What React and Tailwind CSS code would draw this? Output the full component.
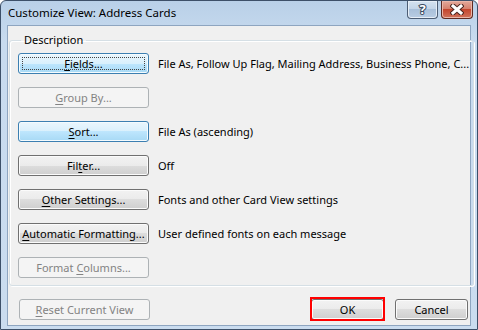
const font = { fontFamily: '"Noto Sans", "Segoe UI", sans-serif' };

const normal =
  "border-[#707070] bg-[linear-gradient(#f2f2f2_0%,#ebebeb_50%,#dddddd_50%,#cfcfcf_100%)] text-black shadow-[inset_0_0_0_1px_#fbfbfb]";
const hot =
  "border-[#3c7fb1] bg-[linear-gradient(#eaf6fd_0%,#d9f0fc_50%,#bee6fd_50%,#a7d9f5_100%)] text-black shadow-[inset_0_0_0_1px_#f4fbfe]";
const disabled = "border-[#adb2b5] bg-[#f4f4f4] text-[#838383]";

function Btn({ children, kind = "normal", focus = false, className = "" }) {
  const look = kind === "hot" ? hot : kind === "disabled" ? disabled : normal;
  return (
    <button
      className={`relative flex h-[21px] items-center justify-center whitespace-nowrap rounded-[3px] border text-[11px] leading-none ${look} ${className}`}
    >
      {children}
      {focus && (
        <span className="pointer-events-none absolute inset-[3px] border border-dotted border-[#444]" />
      )}
    </button>
  );
}

const U = ({ children }) => <span className="underline underline-offset-[2px]">{children}</span>;

const rows = [
  { label: <><U>F</U>ields...</>, kind: "hot", focus: true, desc: "File As, Follow Up Flag, Mailing Address, Business Phone, C..." },
  { label: <><U>G</U>roup By...</>, kind: "disabled" },
  { label: <><U>S</U>ort...</>, kind: "hot", desc: "File As (ascending)" },
  { label: <>Fil<U>t</U>er...</>, desc: "Off" },
  { label: <><U>O</U>ther Settings...</>, desc: "Fonts and other Card View settings" },
  { label: <><U>A</U>utomatic Formatting...</>, desc: "User defined fonts on each message" },
  { label: <>Format <U>C</U>olumns...</>, kind: "disabled" },
];

export default function App() {
  return (
    <div
      style={font}
      className="flex h-[330px] w-[478px] flex-col overflow-hidden rounded-t-[6px] border border-[#3d5069] bg-[linear-gradient(#b9d0e8,#c8dbef_40px,#cadcef)]"
    >
      {/* title bar */}
      <div className="flex h-[24px] shrink-0 items-start justify-between pl-[7px] pr-[4px]">
        <div className="pt-[5px] text-[11.5px] leading-[14px] text-black">Customize View: Address Cards</div>
        <div className="flex gap-[3px]">
          <div className="flex h-[18px] w-[31px] items-center justify-center rounded-b-[4px] border border-t-0 border-[#4c5d74] bg-[linear-gradient(#d5e2f0_0%,#c2d4e8_50%,#a9c0da_50%,#b9cde3_100%)] shadow-[inset_0_0_0_1px_#e6eef7]">
            <span className="text-[13px] font-bold leading-none text-white [-webkit-text-stroke:2px_#3c4b60] [paint-order:stroke_fill]">?</span>
          </div>
          <div className="flex h-[18px] w-[32px] items-center justify-center rounded-b-[4px] border border-t-0 border-[#5e2a22] bg-[linear-gradient(#e3a99b_0%,#d47d69_50%,#c4462e_50%,#d0735c_100%)] shadow-[inset_0_0_0_1px_#eab6a9]">
            <svg width="14" height="11" viewBox="0 0 14 11">
              <path d="M3 2 L11 9 M11 2 L3 9" stroke="#4a2620" strokeWidth="5" strokeLinecap="square" />
              <path d="M3 2 L11 9 M11 2 L3 9" stroke="#fff" strokeWidth="3" strokeLinecap="square" />
            </svg>
          </div>
        </div>
      </div>

      {/* client area */}
      <div className="mx-[6px] mb-[3px] flex flex-1 flex-col border border-[#8ea5c0] bg-[#f0f0f0] text-[11px] leading-[14px] text-black">
        <fieldset className="mx-[1px] mt-[7px] rounded-[3px] border border-[#d5dfe5] pb-[7px] pl-[8px] pr-[4px] pt-[6px] shadow-[inset_1px_1px_0_#fff,1px_1px_0_#fff]">
          <legend className="ml-[3px] px-[3px] leading-[14px]">Description</legend>
          <div className="flex flex-col gap-[13px]">
            {rows.map((r, i) => (
              <div key={i} className="flex items-center gap-[9px]">
                <Btn kind={r.kind} focus={r.focus} className="w-[131px] shrink-0">
                  <span>{r.label}</span>
                </Btn>
                {r.desc && <span className="whitespace-nowrap">{r.desc}</span>}
              </div>
            ))}
          </div>
        </fieldset>

        <div className="mt-[13px] flex items-center pl-[11px] pr-[2px]">
          <Btn kind="disabled" className="w-[131px]">
            <span><U>R</U>eset Current View</span>
          </Btn>
          <div className="relative ml-auto">
            <Btn className="w-[73px]">OK</Btn>
            <span className="pointer-events-none absolute inset-x-[-1px] top-[-2px] bottom-[-1px] border-2 border-[#ff0000]" />
          </div>
          <Btn className="ml-[11px] w-[73px]">Cancel</Btn>
        </div>
      </div>
    </div>
  );
}
